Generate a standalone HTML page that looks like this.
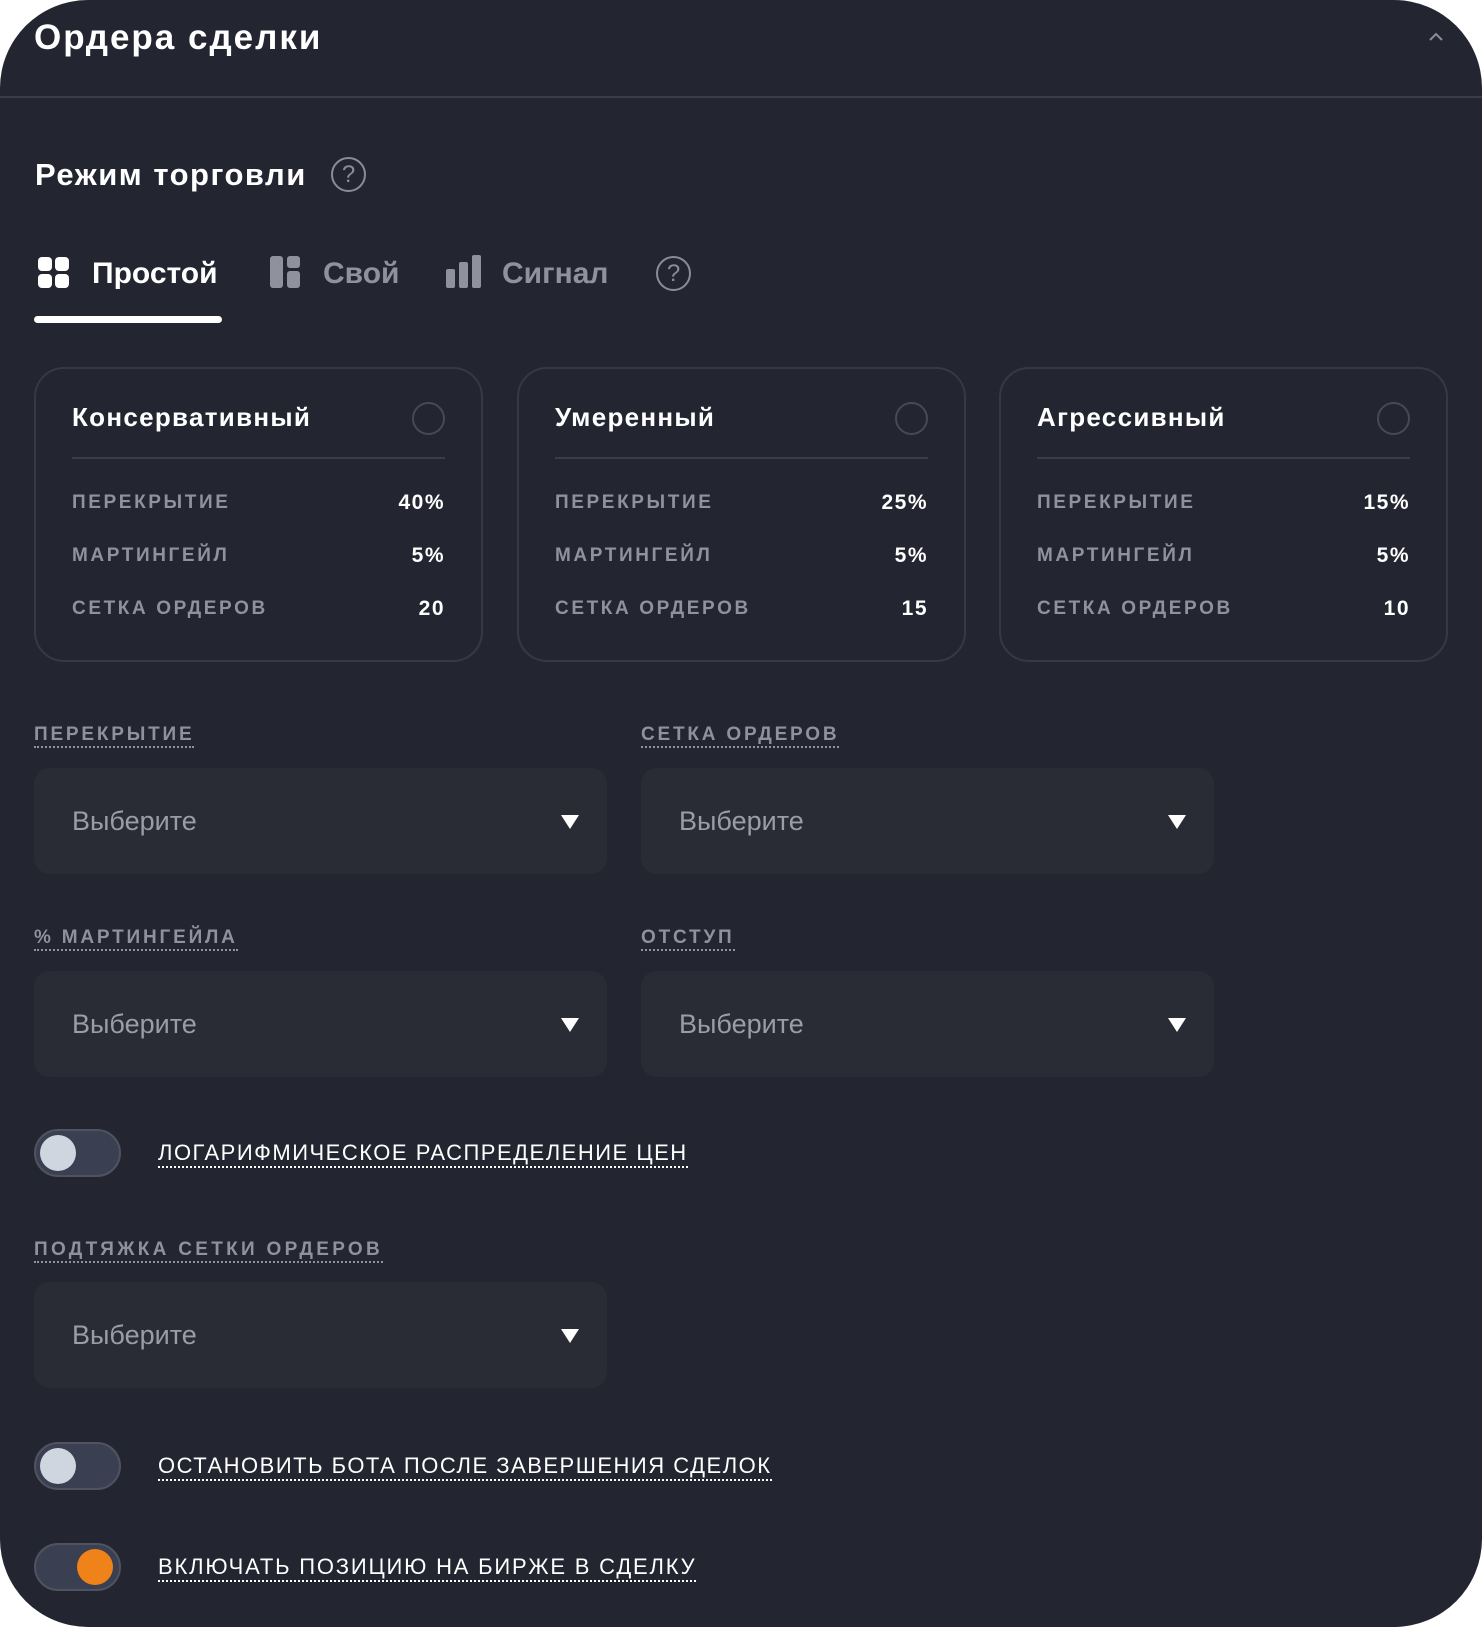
<!DOCTYPE html>
<html><head><meta charset="utf-8"><style>
*{margin:0;padding:0;box-sizing:border-box}
html,body{width:1482px;height:1627px;background:#fff;overflow:hidden}
body{font-family:"Liberation Sans",sans-serif}
.wrap{position:absolute;left:0;top:0;width:1482px;height:1627px;background:#232530;border-radius:88px 88px 88px 88px;overflow:hidden}
.abs{position:absolute}
.title{left:34px;top:16px;font-size:35px;font-weight:bold;color:#fff;line-height:44px;letter-spacing:2px}
.hline{left:0;top:96px;width:1482px;height:2px;background:#3a3d48}
.h2{left:35px;top:156px;font-size:31px;font-weight:bold;color:#fff;line-height:38px;letter-spacing:1.5px}
.q{width:35px;height:35px;border:2px solid #8a8d97;border-radius:50%;color:#8a8d97;font-size:24px;text-align:center;line-height:31px}
.tab{top:255px;font-size:30px;font-weight:bold;line-height:38px;color:#8f929c}
.card{top:367px;width:449px;height:295px;border:2px solid #363944;border-radius:30px}
.ct{position:absolute;left:36px;top:33px;font-size:26px;font-weight:bold;color:#fff;letter-spacing:1.3px}
.rad{position:absolute;right:36px;top:33px;width:33px;height:33px;border:2px solid #474a55;border-radius:50%}
.cd{position:absolute;left:36px;right:36px;top:88px;height:2px;background:#3a3d48}
.row{position:absolute;left:36px;right:36px;height:24px;font-size:19px;font-weight:bold;letter-spacing:2.6px;color:#8f929c;line-height:24px}
.row b{position:absolute;right:0;top:0;color:#fff;letter-spacing:1.5px;font-size:21px}
.lbl{font-size:19px;font-weight:bold;color:#8f929c;letter-spacing:2.8px;line-height:22px;border-bottom:2px dotted #8f929c}
.sel{width:573px;height:106px;background:#292c35;border-radius:16px}
.sel span{position:absolute;left:38px;top:36px;font-size:27px;color:#9a9ca6;line-height:34px}
.sel i{position:absolute;right:28px;top:47px;width:0;height:0;border-left:9px solid transparent;border-right:9px solid transparent;border-top:14px solid #fff}
.tg{left:34px;width:87px;height:48px;border-radius:24px;background:#3a3f52;border:2px solid #4f535f}
.tg .k{position:absolute;top:4px;left:4px;width:36px;height:36px;border-radius:50%;background:#cfd6e0}
.tl{left:158px;font-size:22px;color:#fff;letter-spacing:1.5px;line-height:26px;border-bottom:2px dotted #fff}
</style></head><body><div class="wrap">
<div class="abs title">Ордера сделки</div>
<svg class="abs" style="left:1427px;top:31px" width="18" height="12" viewBox="0 0 18 12"><path d="M3 9 L9 3 L15 9" stroke="#8a8d97" stroke-width="2" fill="none"/></svg>
<div class="abs hline"></div>
<div class="abs h2">Режим торговли</div>
<div class="abs q" style="left:331px;top:157px">?</div>

<svg class="abs" style="left:38px;top:257px" width="32" height="32" viewBox="0 0 32 32"><rect x="0" y="0" width="14" height="14" rx="4" fill="#fff"/><rect x="17" y="0" width="14" height="14" rx="4" fill="#fff"/><rect x="0" y="17" width="14" height="14" rx="4" fill="#fff"/><rect x="17" y="17" width="14" height="14" rx="4" fill="#fff"/></svg>
<div class="abs tab" style="left:92px;color:#fff">Простой</div>
<div class="abs" style="left:34px;top:316px;width:188px;height:7px;border-radius:4px;background:#fff"></div>
<svg class="abs" style="left:270px;top:256px" width="31" height="32" viewBox="0 0 31 32"><rect x="0" y="0" width="13" height="32" rx="3" fill="#8f929c"/><rect x="17" y="0" width="13" height="12" rx="3" fill="#8f929c"/><rect x="17" y="15" width="13" height="17" rx="3" fill="#8f929c"/></svg>
<div class="abs tab" style="left:323px">Свой</div>
<svg class="abs" style="left:446px;top:255px" width="36" height="33" viewBox="0 0 36 33"><rect x="0" y="14" width="9" height="19" rx="2" fill="#8f929c"/><rect x="13" y="7" width="9" height="26" rx="2" fill="#8f929c"/><rect x="26" y="0" width="9" height="33" rx="2" fill="#8f929c"/></svg>
<div class="abs tab" style="left:502px">Сигнал</div>
<div class="abs q" style="left:656px;top:256px">?</div>

<div class="abs card" style="left:34px"><div class="ct">Консервативный</div><div class="rad"></div><div class="cd"></div>
<div class="row" style="top:122px">ПЕРЕКРЫТИЕ<b>40%</b></div><div class="row" style="top:175px">МАРТИНГЕЙЛ<b>5%</b></div><div class="row" style="top:228px">СЕТКА ОРДЕРОВ<b>20</b></div></div>
<div class="abs card" style="left:517px"><div class="ct">Умеренный</div><div class="rad"></div><div class="cd"></div>
<div class="row" style="top:122px">ПЕРЕКРЫТИЕ<b>25%</b></div><div class="row" style="top:175px">МАРТИНГЕЙЛ<b>5%</b></div><div class="row" style="top:228px">СЕТКА ОРДЕРОВ<b>15</b></div></div>
<div class="abs card" style="left:999px"><div class="ct">Агрессивный</div><div class="rad"></div><div class="cd"></div>
<div class="row" style="top:122px">ПЕРЕКРЫТИЕ<b>15%</b></div><div class="row" style="top:175px">МАРТИНГЕЙЛ<b>5%</b></div><div class="row" style="top:228px">СЕТКА ОРДЕРОВ<b>10</b></div></div>

<div class="abs lbl" style="left:34px;top:724px">ПЕРЕКРЫТИЕ</div>
<div class="abs lbl" style="left:641px;top:724px">СЕТКА ОРДЕРОВ</div>
<div class="abs sel" style="left:34px;top:768px"><span>Выберите</span><i></i></div>
<div class="abs sel" style="left:641px;top:768px"><span>Выберите</span><i></i></div>
<div class="abs lbl" style="left:34px;top:927px">% МАРТИНГЕЙЛА</div>
<div class="abs lbl" style="left:641px;top:927px">ОТСТУП</div>
<div class="abs sel" style="left:34px;top:971px"><span>Выберите</span><i></i></div>
<div class="abs sel" style="left:641px;top:971px"><span>Выберите</span><i></i></div>

<div class="abs tg" style="top:1129px"><div class="k"></div></div>
<div class="abs tl" style="top:1140px">ЛОГАРИФМИЧЕСКОЕ РАСПРЕДЕЛЕНИЕ ЦЕН</div>

<div class="abs lbl" style="left:34px;top:1239px;letter-spacing:3.3px">ПОДТЯЖКА СЕТКИ ОРДЕРОВ</div>
<div class="abs sel" style="left:34px;top:1282px"><span>Выберите</span><i></i></div>

<div class="abs tg" style="top:1442px"><div class="k"></div></div>
<div class="abs tl" style="top:1453px">ОСТАНОВИТЬ БОТА ПОСЛЕ ЗАВЕРШЕНИЯ СДЕЛОК</div>
<div class="abs tg" style="top:1543px"><div class="k" style="left:41px;background:#f0821a"></div></div>
<div class="abs tl" style="top:1554px;letter-spacing:1.8px">ВКЛЮЧАТЬ ПОЗИЦИЮ НА БИРЖЕ В СДЕЛКУ</div>
</div></body></html>
